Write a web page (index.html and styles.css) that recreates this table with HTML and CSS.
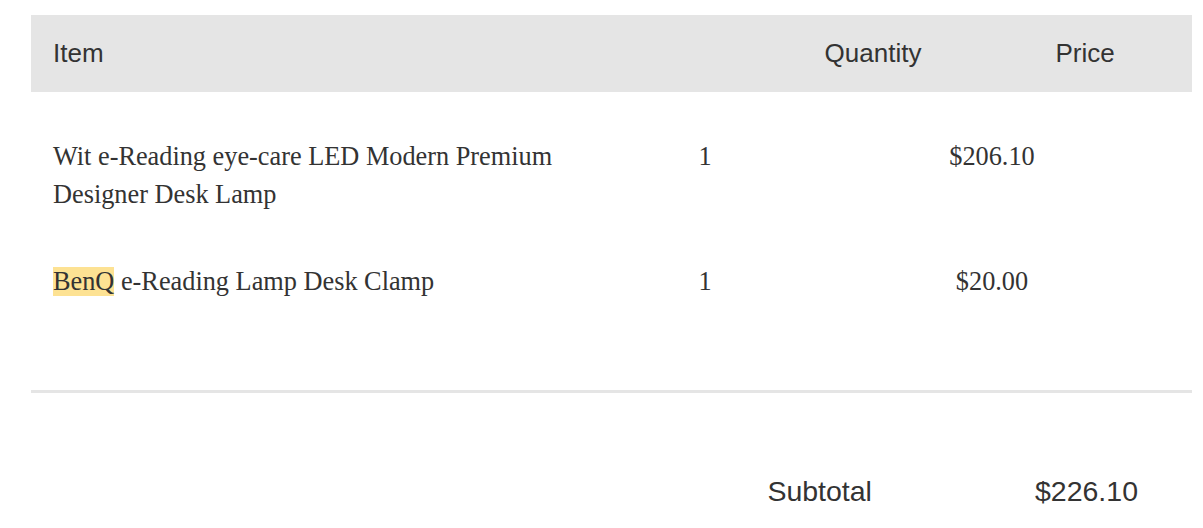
FILE: index.html
```html
<!DOCTYPE html>
<html>
<head>
<meta charset="utf-8">
<link rel="stylesheet" href="styles.css">
</head>
<body>
<div class="cart">
  <div class="cart-head">
    <div class="col-item">Item</div>
    <div class="col-qty">Quantity</div>
    <div class="col-price">Price</div>
  </div>
  <div class="cart-body">
    <div class="row">
      <div class="cell-item">Wit e-Reading eye-care LED Modern Premium Designer Desk Lamp</div>
      <div class="cell-qty">1</div>
      <div class="cell-price">$206.10</div>
    </div>
    <div class="row">
      <div class="cell-item"><mark class="hl">BenQ</mark> e-Reading Lamp Desk Clamp</div>
      <div class="cell-qty">1</div>
      <div class="cell-price">$20.00</div>
    </div>
  </div>
  <div class="divider"></div>
  <div class="totals">
    <span class="total-label">Subtotal</span>
    <span class="total-value">$226.10</span>
  </div>
</div>
</body>
</html>
```
FILE: styles.css
```css
html, body {
  margin: 0;
  padding: 0;
  background: #ffffff;
}
.cart {
  margin: 15px 11px 0 31px;
  color: #333333;
}
.cart-head {
  display: grid;
  grid-template-columns: 1fr 254px 170px;
  align-items: center;
  height: 77px;
  padding: 0 22px;
  background: #e5e5e5;
  font-family: "Liberation Sans", Arial, sans-serif;
  font-size: 26px;
  color: #333333;
}
.col-qty, .col-price {
  text-align: center;
}
.cart-body {
  padding: 46px 0 0 22px;
  font-family: "Liberation Serif", "Times New Roman", serif;
  font-size: 26.3px;
  line-height: 38px;
  color: #333333;
}
.row {
  display: grid;
  grid-template-columns: 560px 184px 390px;
  margin-bottom: 49px;
}
.row:last-child {
  margin-bottom: 0;
}
.cell-qty, .cell-price {
  text-align: center;
}
.hl {
  background: #fde293;
  color: #333333;
}
.divider {
  height: 3px;
  background: #e5e5e5;
  margin-top: 89px;
}
.totals {
  display: flex;
  justify-content: flex-end;
  gap: 163px;
  padding-right: 54px;
  margin-top: 82px;
  font-family: "Liberation Sans", Arial, sans-serif;
  font-size: 28.5px;
  line-height: 32px;
  color: #333333;
}
```
